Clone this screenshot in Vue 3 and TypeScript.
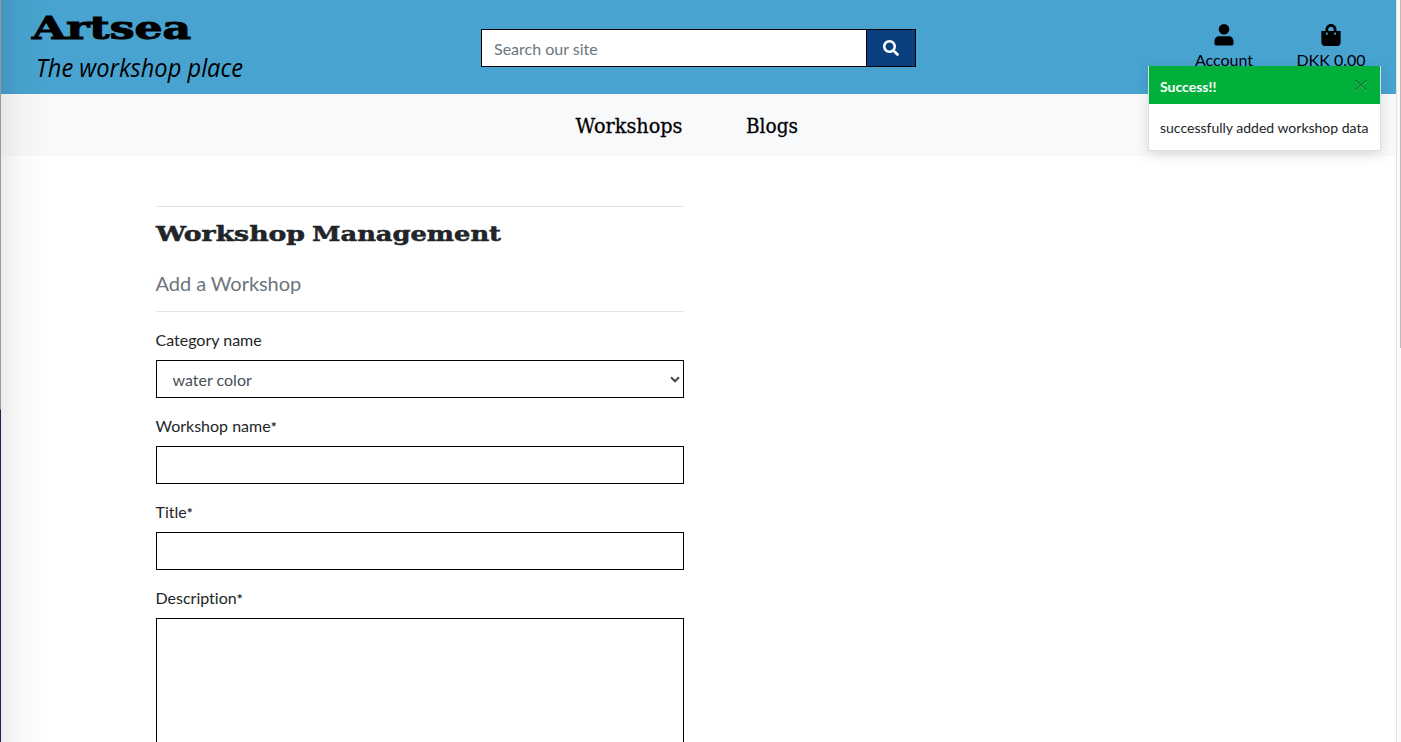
<script setup lang="ts">
import { ref } from 'vue'

const fields: { label: string; required: boolean; kind: 'select' | 'input' | 'textarea' }[] = [
  { label: 'Category name', required: false, kind: 'select' },
  { label: 'Workshop name', required: true, kind: 'input' },
  { label: 'Title', required: true, kind: 'input' },
  { label: 'Description', required: true, kind: 'textarea' },
]
const toastOpen = ref(true)
</script>

<template>
  <div class="window">
    <div class="page">
      <header class="top">
        <a class="brand">
          <svg width="260" height="94" viewBox="0 0 260 94">
            <text class="logo" x="32" y="39" textLength="159" lengthAdjust="spacingAndGlyphs">Artsea</text>
            <text class="tagline" x="36" y="77" textLength="207" lengthAdjust="spacingAndGlyphs">The workshop place</text>
          </svg>
        </a>
        <form class="search" @submit.prevent>
          <input type="text" placeholder="Search our site" />
          <button type="submit" aria-label="Search">
            <svg width="16" height="16" viewBox="0 0 512 512"><path fill="#fff" d="M505 442.700 405.300 343c-4.500-4.500-10.600-7-17-7H372c27.600-35.300 44-79.700 44-128C416 93.100 322.900 0 208 0S0 93.100 0 208s93.100 208 208 208c48.300 0 92.700-16.400 128-44v16.300c0 6.400 2.500 12.500 7 17l99.700 99.700c9.400 9.400 24.600 9.400 33.900 0l28.300-28.300c9.400-9.400 9.400-24.600.1-34zM208 336c-70.700 0-128-57.200-128-128 0-70.700 57.200-128 128-128 70.700 0 128 57.200 128 128 0 70.700-57.200 128-128 128z" /></svg>
          </button>
        </form>
        <nav class="links">
          <a class="account">
            <svg width="20" height="22" viewBox="0 0 20 22"><circle cx="10" cy="5.300" r="5.300" /><path d="M5 12.200h10c2.700 0 4.500 2.200 4.500 5v2.300c0 1.400-.8 2.100-2.200 2.100H2.700C1.300 21.600.5 20.900.5 19.500v-2.300c0-2.800 1.800-5 4.500-5z" /></svg>
            <span>Account</span>
          </a>
          <a class="bag">
            <svg width="20" height="22" viewBox="0 0 448 512"><path d="M352 160v-32C352 57.420 294.579 0 224 0 153.420 0 96 57.420 96 128v32H0v272c0 44.183 35.817 80 80 80h288c44.183 0 80-35.817 80-80V160h-96zm-192-32c0-35.290 28.710-64 64-64s64 28.710 64 64v32H160v-32zm160 120c-13.255 0-24-10.745-24-24s10.745-24 24-24 24 10.745 24 24-10.745 24-24 24zm-192 0c-13.255 0-24-10.745-24-24s10.745-24 24-24 24 10.745 24 24-10.745 24-24 24z" /></svg>
            <span>DKK 0.00</span>
          </a>
        </nav>
      </header>

      <nav class="menu">
        <svg width="240" height="62" viewBox="0 0 240 62">
          <text class="slab" x="0.500" y="39" textLength="107" lengthAdjust="spacingAndGlyphs">Workshops</text>
          <text class="slab" x="171" y="39" textLength="52" lengthAdjust="spacingAndGlyphs">Blogs</text>
        </svg>
      </nav>

      <main>
        <div class="column">
          <hr />
          <h2>
            <svg width="360" height="50" viewBox="0 0 360 50">
              <text class="heading" x="0" y="34" textLength="149" lengthAdjust="spacingAndGlyphs">Workshop</text>
              <text class="heading" x="156" y="34" textLength="189" lengthAdjust="spacingAndGlyphs">Management</text>
            </svg>
          </h2>
          <h5>Add a Workshop</h5>
          <hr />
          <form class="fields" @submit.prevent>
            <label v-for="f in fields" :key="f.label" class="field">
              <span>{{ f.label }}<b v-if="f.required">*</b></span>
              <div v-if="f.kind === 'select'" class="control select">
                water color
                <svg width="10" height="8" viewBox="0 0 10 8"><path d="M1 1.300 5 5.300 9 1.300" fill="none" stroke="#43484d" stroke-width="2" /></svg>
              </div>
              <input v-else-if="f.kind === 'input'" class="control" type="text" />
              <textarea v-else class="control area"></textarea>
            </label>
          </form>
        </div>
      </main>
    </div>

    <div class="scrollbar"><div class="thumb"></div></div>
    <div class="shade"></div>
    <div class="edge"></div>

    <aside v-if="toastOpen" class="toast">
      <div class="toast-head">
        <strong>Success!!</strong>
        <svg width="12" height="12" viewBox="0 0 12 12" @click="toastOpen = false">
          <path d="M.5 2 11.500 12M11.500 2 .5 12" stroke="#6fd18c" stroke-width="1" />
          <path d="M.5 1 11.500 11M11.500 1 .5 11" stroke="#087a32" stroke-width="1.300" />
        </svg>
      </div>
      <div class="toast-body">successfully added workshop data</div>
    </aside>
  </div>
</template>

<style>
body {
  margin: 0;
  overflow: hidden;
}
</style>

<style scoped>
.window {
  position: relative;
  display: flex;
  width: 1401px;
  height: 742px;
  overflow: hidden;
  background: #fff;
  color: #212529;
  font: 16px/24px Lato, sans-serif;
  font-variant-ligatures: none;
}
.window * {
  box-sizing: border-box;
}
svg {
  display: block;
  overflow: visible;
}
.page {
  width: 1396px;
  flex: none;
}
.top {
  display: flex;
  height: 94px;
  background: #48a3d0;
  color: #000;
}
.brand {
  width: 481px;
}
.logo {
  font: bold 31px "DejaVu Serif", serif;
  stroke: #000;
  stroke-width: 1px;
}
.tagline {
  font: italic 500 25px "Open Sans", sans-serif;
}
.search {
  display: flex;
  width: 435px;
  height: 38px;
  margin-top: 29px;
  border: 1px solid #000;
}
.search input {
  flex: 1;
  min-width: 0;
  padding: 0 12px;
  border: 0;
  outline: 0;
  background: #fff;
  font: 16px Lato, sans-serif;
}
.search input::placeholder {
  color: #6c757d;
  opacity: 1;
}
.search button {
  display: flex;
  width: 49px;
  padding: 0 1px 0 0;
  border: 0;
  border-left: 1px solid #000;
  align-items: center;
  justify-content: center;
  background: #0b4080;
}
.links {
  display: flex;
  gap: 43px;
  margin: 24px 0 0 278.500px;
}
.links a {
  display: flex;
  flex-direction: column;
  align-items: center;
  gap: 2px;
  white-space: nowrap;
}
.account {
  width: 59px;
}
.bag {
  width: 69px;
}
.menu {
  height: 62px;
  padding-left: 575px;
  background: #f8f9fb;
}
.slab {
  font: 20px "DejaVu Serif", serif;
  fill: #000;
  stroke: #000;
  stroke-width: 0.3px;
}
main {
  padding: 50px 0 0 156px;
}
.column {
  width: 528px;
}
hr {
  height: 1px;
  margin: 0;
  border: 0;
  background: #e3e4e5;
}
h2 {
  height: 50px;
  margin: 0;
}
.heading {
  font: bold 20px "DejaVu Serif", serif;
  fill: #212529;
  stroke: #212529;
  stroke-width: 0.5px;
}
h5 {
  height: 54px;
  margin: 0 0 0 -0.500px;
  padding-top: 14px;
  font-size: 20px;
  font-weight: 400;
  line-height: 24px;
  letter-spacing: -0.050px;
  color: #6c757d;
}
.fields {
  display: flex;
  flex-direction: column;
  gap: 16px;
  padding-top: 16px;
}
.field {
  display: flex;
  flex-direction: column;
  gap: 8px;
}
.field > span {
  margin-left: -0.500px;
}
.field b {
  font-size: 14px;
  line-height: 16px;
}
.control {
  width: 528px;
  height: 38px;
  margin: 0;
  padding: 2px 3px 0 15.500px;
  border: 1px solid #000;
  border-radius: 0;
  outline: 0;
  background: #fff;
  color: #495057;
}
.select {
  display: flex;
  align-items: center;
  justify-content: space-between;
}
.area {
  height: 250px;
  resize: none;
}
.scrollbar {
  display: flex;
  width: 5px;
  justify-content: flex-end;
  border-left: 1px solid #e4e4e4;
  background: #fafafa;
}
.thumb {
  width: 1px;
  height: 348px;
  background: #bcbcbc;
}
.shade {
  position: absolute;
  inset: 0 auto 0 0;
  width: 48px;
  background: linear-gradient(90deg, rgba(0, 0, 0, 0.075), rgba(0, 0, 0, 0.025) 45%, transparent);
}
.edge {
  position: absolute;
  inset: 0 auto 0 0;
  width: 1px;
  background: linear-gradient(#9a9a9e 409px, #20264c 410px);
}
.toast {
  position: absolute;
  top: 66px;
  left: 1148px;
  width: 233px;
  height: 85px;
  border: 1px solid #dcdee0;
  border-top: 0;
  background: #fff;
  box-shadow: 0 4px 12px rgba(0, 0, 0, 0.12);
  font-size: 14px;
}
.toast-head {
  display: flex;
  height: 38px;
  padding: 4px 13px 0 11px;
  align-items: center;
  justify-content: space-between;
  background: #00b03b;
  color: #fff;
}
.toast-head svg {
  margin-top: -4px;
}
.toast-body {
  padding: 12px 11px;
  white-space: nowrap;
}
</style>
